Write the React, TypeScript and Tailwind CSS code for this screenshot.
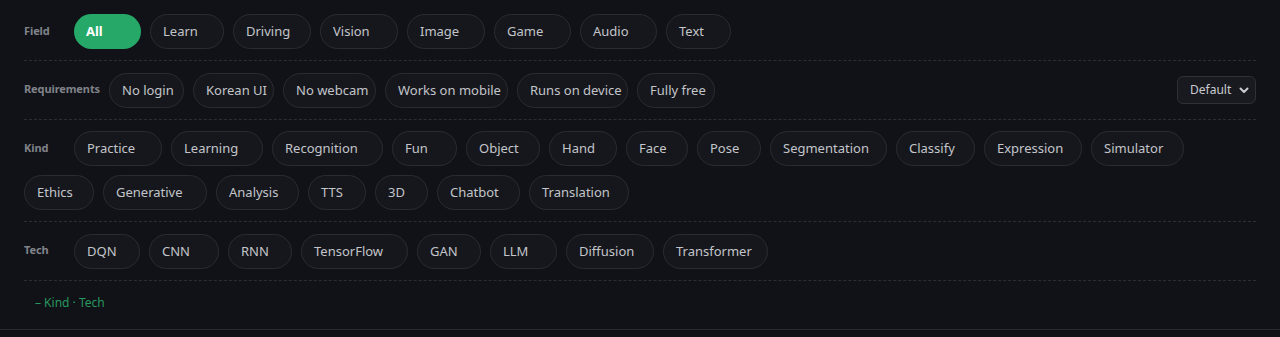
import React from "react";

type Chip = [string, string];

const field: Chip[] = [
  ["Learn", "w-[74px]"],
  ["Driving", "w-[78px]"],
  ["Vision", "w-[78px]"],
  ["Image", "w-[78px]"],
  ["Game", "w-[77px]"],
  ["Audio", "w-[77px]"],
  ["Text", "w-[65px]"],
];

const reqs: Chip[] = [
  ["No login", "w-[75px]"],
  ["Korean UI", "w-[81px]"],
  ["No webcam", "w-[93px]"],
  ["Works on mobile", "w-[123px]"],
  ["Runs on device", "w-[111px]"],
  ["Fully free", "w-[78px]"],
];

const kinds: Chip[] = [
  ["Practice", "w-[88px]"],
  ["Learning", "w-[92px]"],
  ["Recognition", "w-[111px]"],
  ["Fun", "w-[65px]"],
  ["Object", "w-[74px]"],
  ["Hand", "w-[68px]"],
  ["Face", "w-[62px]"],
  ["Pose", "w-[64px]"],
  ["Segmentation", "w-[117px]"],
  ["Classify", "w-[79px]"],
  ["Expression", "w-[98px]"],
  ["Simulator", "w-[93px]"],
  ["Ethics", "w-[70px]"],
  ["Generative", "w-[104px]"],
  ["Analysis", "w-[83px]"],
  ["TTS", "w-[58px]"],
  ["3D", "w-[53px]"],
  ["Chatbot", "w-[83px]"],
  ["Translation", "w-[100px]"],
];

const techs: Chip[] = [
  ["DQN", "w-[66px]"],
  ["CNN", "w-[70px]"],
  ["RNN", "w-[64px]"],
  ["TensorFlow", "w-[107px]"],
  ["GAN", "w-[64px]"],
  ["LLM", "w-[67px]"],
  ["Diffusion", "w-[88px]"],
  ["Transformer", "w-[105px]"],
];

function ChipBtn({ label, w }: { label: string; w: string }) {
  return (
    <button
      className={`${w} h-[35px] shrink-0 rounded-full border border-[#2a2c31] bg-[#16171c] pl-3 text-left text-[13px] leading-none text-[#c3c5ca]`}
    >
      {label}
    </button>
  );
}

function Label({ children, w = "w-[41px]" }: { children: React.ReactNode; w?: string }) {
  return (
    <span
      className={`${w} flex h-[35px] shrink-0 items-center whitespace-nowrap pb-[1px] text-[11px] font-bold tracking-[-0.1px] text-[#80838a]`}
    >
      {children}
    </span>
  );
}

export default function App() {
  return (
    <div
      className="min-h-[337px] w-full bg-[#111217]"
      style={{ fontFamily: '"Noto Sans", "Open Sans", sans-serif' }}
    >
      <div className="border-b border-[#2a2b30]">
        <div className="px-6 pt-[2.5px]">
          {/* Field */}
          <div className="flex flex-wrap items-center gap-[9px] border-b border-dashed border-[#2c2e34] pt-[11.5px] pb-[11px]">
            <Label>Field</Label>
            <button className="h-[35px] w-[67px] shrink-0 rounded-full bg-[#25a868] pl-3 text-left text-[13px] font-bold leading-none text-white">
              All
            </button>
            {field.map(([l, w]) => (
              <ChipBtn key={l} label={l} w={w} />
            ))}
          </div>

          {/* Requirements */}
          <div className="flex items-center border-b border-dashed border-[#2c2e34] pt-[11.5px] pb-[11px]">
            <div className="flex flex-wrap items-center gap-[9px]">
              <Label w="w-[76px]">Requirements</Label>
              {reqs.map(([l, w]) => (
                <ChipBtn key={l} label={l} w={w} />
              ))}
            </div>
            <div className="ml-auto flex h-[28px] w-[79px] items-center justify-between rounded-md border border-[#2e3036] bg-[#181a1f] pl-[12px] pr-[6px] text-[12px] text-[#c9cbd0]">
              <span>Default</span>
              <svg width="10" height="10" viewBox="0 0 10 10" fill="none">
                <path
                  d="M1.5 3.5 L5 7 L8.5 3.5"
                  stroke="#c9cbd0"
                  strokeWidth="2"
                  strokeLinecap="round"
                  strokeLinejoin="round"
                />
              </svg>
            </div>
          </div>

          {/* Kind */}
          <div className="flex flex-wrap items-center gap-[9px] border-b border-dashed border-[#2c2e34] pt-[11.5px] pb-[11px]">
            <Label>Kind</Label>
            {kinds.map(([l, w]) => (
              <ChipBtn key={l} label={l} w={w} />
            ))}
          </div>

          {/* Tech */}
          <div className="flex flex-wrap items-center gap-[9px] border-b border-dashed border-[#2c2e34] pt-[11.5px] pb-[11px]">
            <Label>Tech</Label>
            {techs.map(([l, w]) => (
              <ChipBtn key={l} label={l} w={w} />
            ))}
          </div>

          {/* footer toggle */}
          <div className="flex h-[48px] items-start pt-[14px] pl-[11px]">
            <button className="text-[12px] leading-4 text-[#27985f]">– Kind · Tech</button>
          </div>
        </div>
      </div>
    </div>
  );
}
